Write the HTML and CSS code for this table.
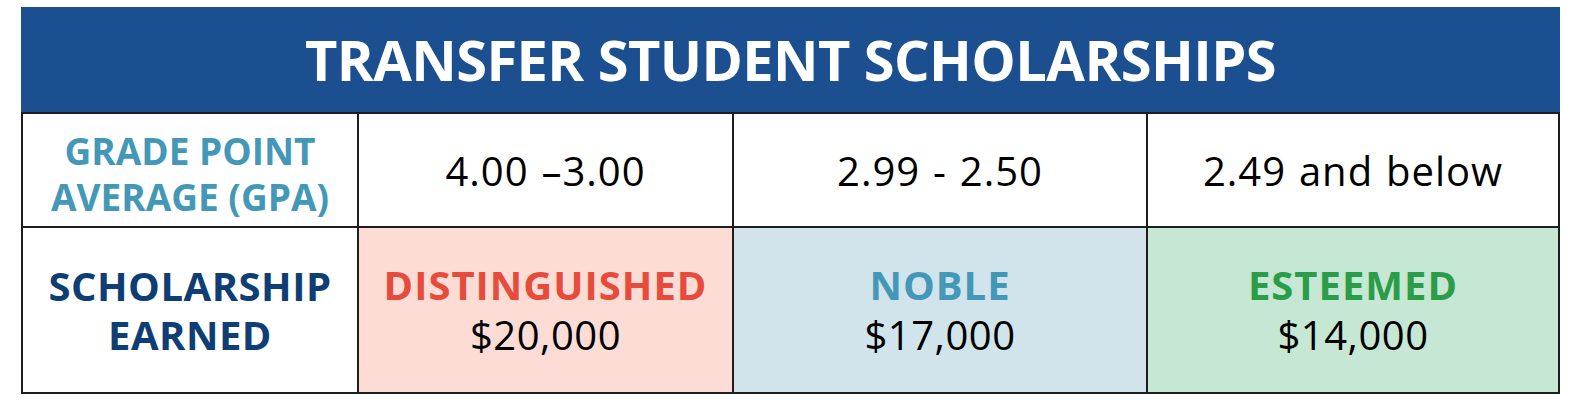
FILE: index.html
```html
<!DOCTYPE html>
<html lang="en">
<head>
<meta charset="utf-8">
<title>Transfer Student Scholarships</title>
<link rel="stylesheet" href="styles.css">
</head>
<body>
<div class="chart">
  <div class="title">TRANSFER STUDENT SCHOLARSHIPS</div>
  <div class="grid">
    <div class="cell label gpa">GRADE POINT<br>AVERAGE (GPA)</div>
    <div class="cell range">4.00 –3.00</div>
    <div class="cell range">2.99 - 2.50</div>
    <div class="cell range">2.49 and below</div>
    <div class="cell label earned">SCHOLARSHIP<br>EARNED</div>
    <div class="cell award pink"><span class="name red">DISTINGUISHED</span><span class="amount">$20,000</span></div>
    <div class="cell award blue"><span class="name teal">NOBLE</span><span class="amount">$17,000</span></div>
    <div class="cell award green"><span class="name grn">ESTEEMED</span><span class="amount">$14,000</span></div>
  </div>
</div>
</body>
</html>
```

FILE: styles.css
```css
html, body {
  margin: 0;
  padding: 0;
  background: #ffffff;
}
body {
  font-family: "Open Sans", "Liberation Sans", sans-serif;
}
.chart {
  margin: 7px 0 0 21px;
  width: 1539px;
}
.title {
  height: 105px;
  background: #1c4f90;
  color: #ffffff;
  font-weight: 700;
  font-size: 56px;
  letter-spacing: -0.6px;
  line-height: 105px;
  text-align: center;
}
.grid {
  display: grid;
  grid-template-columns: 334px 373px 412px 410px;
  grid-template-rows: 112px 164px;
  gap: 2px;
  padding: 2px;
  background: #1e1e1e;
}
.cell {
  background: #ffffff;
  display: flex;
  flex-direction: column;
  align-items: center;
  justify-content: center;
  text-align: center;
}
.label {
  font-weight: 700;
}
.gpa {
  color: #4398b8;
  font-size: 37px;
  line-height: 46px;
  padding-top: 8px;
  box-sizing: border-box;
}
.earned {
  color: #0e3e74;
  font-size: 40px;
  letter-spacing: 0.5px;
  line-height: 49px;
}
.range {
  color: #000000;
  font-size: 40px;
  letter-spacing: 1px;
  word-spacing: 1.5px;
  line-height: 50px;
  padding-top: 2px;
  box-sizing: border-box;
}
.award {
  line-height: 50px;
  font-size: 40px;
}
.name {
  font-weight: 700;
  letter-spacing: 1px;
}
.amount {
  color: #000000;
  font-weight: 400;
  letter-spacing: 0.5px;
}
.pink { background: #fddcd5; }
.blue { background: #d1e3eb; }
.green { background: #c6e7d4; }
.red { color: #e64b3b; }
.teal { color: #4398b8; }
.grn { color: #2b9c48; }
```
